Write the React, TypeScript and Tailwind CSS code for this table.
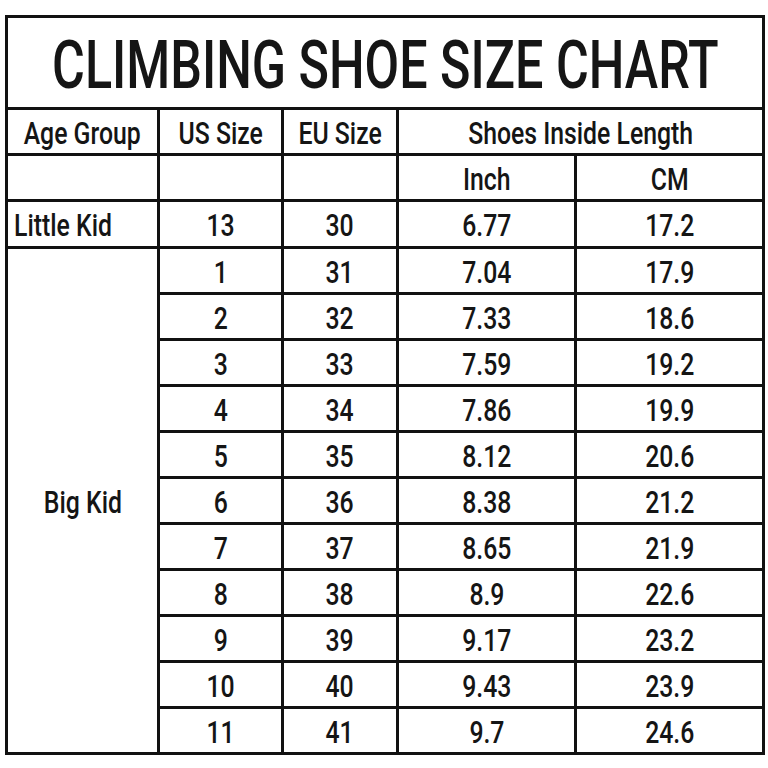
import React from 'react';

const rows: [string, string, string, string][] = [
    ['1', '31', '7.04', '17.9'],
    ['2', '32', '7.33', '18.6'],
    ['3', '33', '7.59', '19.2'],
    ['4', '34', '7.86', '19.9'],
    ['5', '35', '8.12', '20.6'],
    ['6', '36', '8.38', '21.2'],
    ['7', '37', '8.65', '21.9'],
    ['8', '38', '8.9', '22.6'],
    ['9', '39', '9.17', '23.2'],
    ['10', '40', '9.43', '23.9'],
    ['11', '41', '9.7', '24.6'],
];

const cell = 'border-[3px] border-[#111] p-0 leading-none whitespace-nowrap';

// condensed look: narrow the glyphs horizontally
const Txt: React.FC<{ children?: React.ReactNode; left?: boolean }> = ({ children, left }) => (
    <div className={left ? 'flex justify-start pl-[6px]' : 'flex justify-center'}>
        <span className={left ? 'inline-block scale-x-[0.8] origin-left pt-[3px]' : 'inline-block scale-x-[0.8] pt-[3px]'}>
            {children}
        </span>
    </div>
);

const App: React.FC = () => {
    return (
        <div className="w-[768px] h-[768px] bg-white pt-[15px] pl-[5px] font-['Roboto',sans-serif] font-medium text-[#151515]">
            <table className="border-collapse border-[3px] border-[#111] w-[757px] table-fixed">
                <colgroup>
                    <col className="w-[152px]" />
                    <col className="w-[124px]" />
                    <col className="w-[115px]" />
                    <col className="w-[178px]" />
                    <col className="w-[188px]" />
                </colgroup>
                <tbody>
                    <tr className="h-[92px]">
                        <td colSpan={5} className={`${cell} text-[67px]`}>
                            <div className="flex justify-center">
                                <span className="inline-block scale-x-[0.75] pt-[6px]">CLIMBING SHOE SIZE CHART</span>
                            </div>
                        </td>
                    </tr>
                    <tr className="h-[46px] text-[31px]">
                        <td className={cell}><Txt>Age Group</Txt></td>
                        <td className={cell}><Txt>US Size</Txt></td>
                        <td className={cell}><Txt>EU Size</Txt></td>
                        <td colSpan={2} className={cell}><Txt>Shoes Inside Length</Txt></td>
                    </tr>
                    <tr className="h-[46px] text-[31px]">
                        <td className={cell}></td>
                        <td className={cell}></td>
                        <td className={cell}></td>
                        <td className={cell}><Txt>Inch</Txt></td>
                        <td className={cell}><Txt>CM</Txt></td>
                    </tr>
                    <tr className="h-[47px] text-[31px]">
                        <td className={cell}><Txt left>Little Kid</Txt></td>
                        <td className={cell}><Txt>13</Txt></td>
                        <td className={cell}><Txt>30</Txt></td>
                        <td className={cell}><Txt>6.77</Txt></td>
                        <td className={cell}><Txt>17.2</Txt></td>
                    </tr>
                    {rows.map((r, i) => (
                        <tr key={r[0]} className="h-[46px] text-[31px]">
                            {i === 0 && (
                                <td rowSpan={11} className={cell}>
                                    <Txt>Big Kid</Txt>
                                </td>
                            )}
                            <td className={cell}><Txt>{r[0]}</Txt></td>
                            <td className={cell}><Txt>{r[1]}</Txt></td>
                            <td className={cell}><Txt>{r[2]}</Txt></td>
                            <td className={cell}><Txt>{r[3]}</Txt></td>
                        </tr>
                    ))}
                </tbody>
            </table>
        </div>
    );
};

export default App;
